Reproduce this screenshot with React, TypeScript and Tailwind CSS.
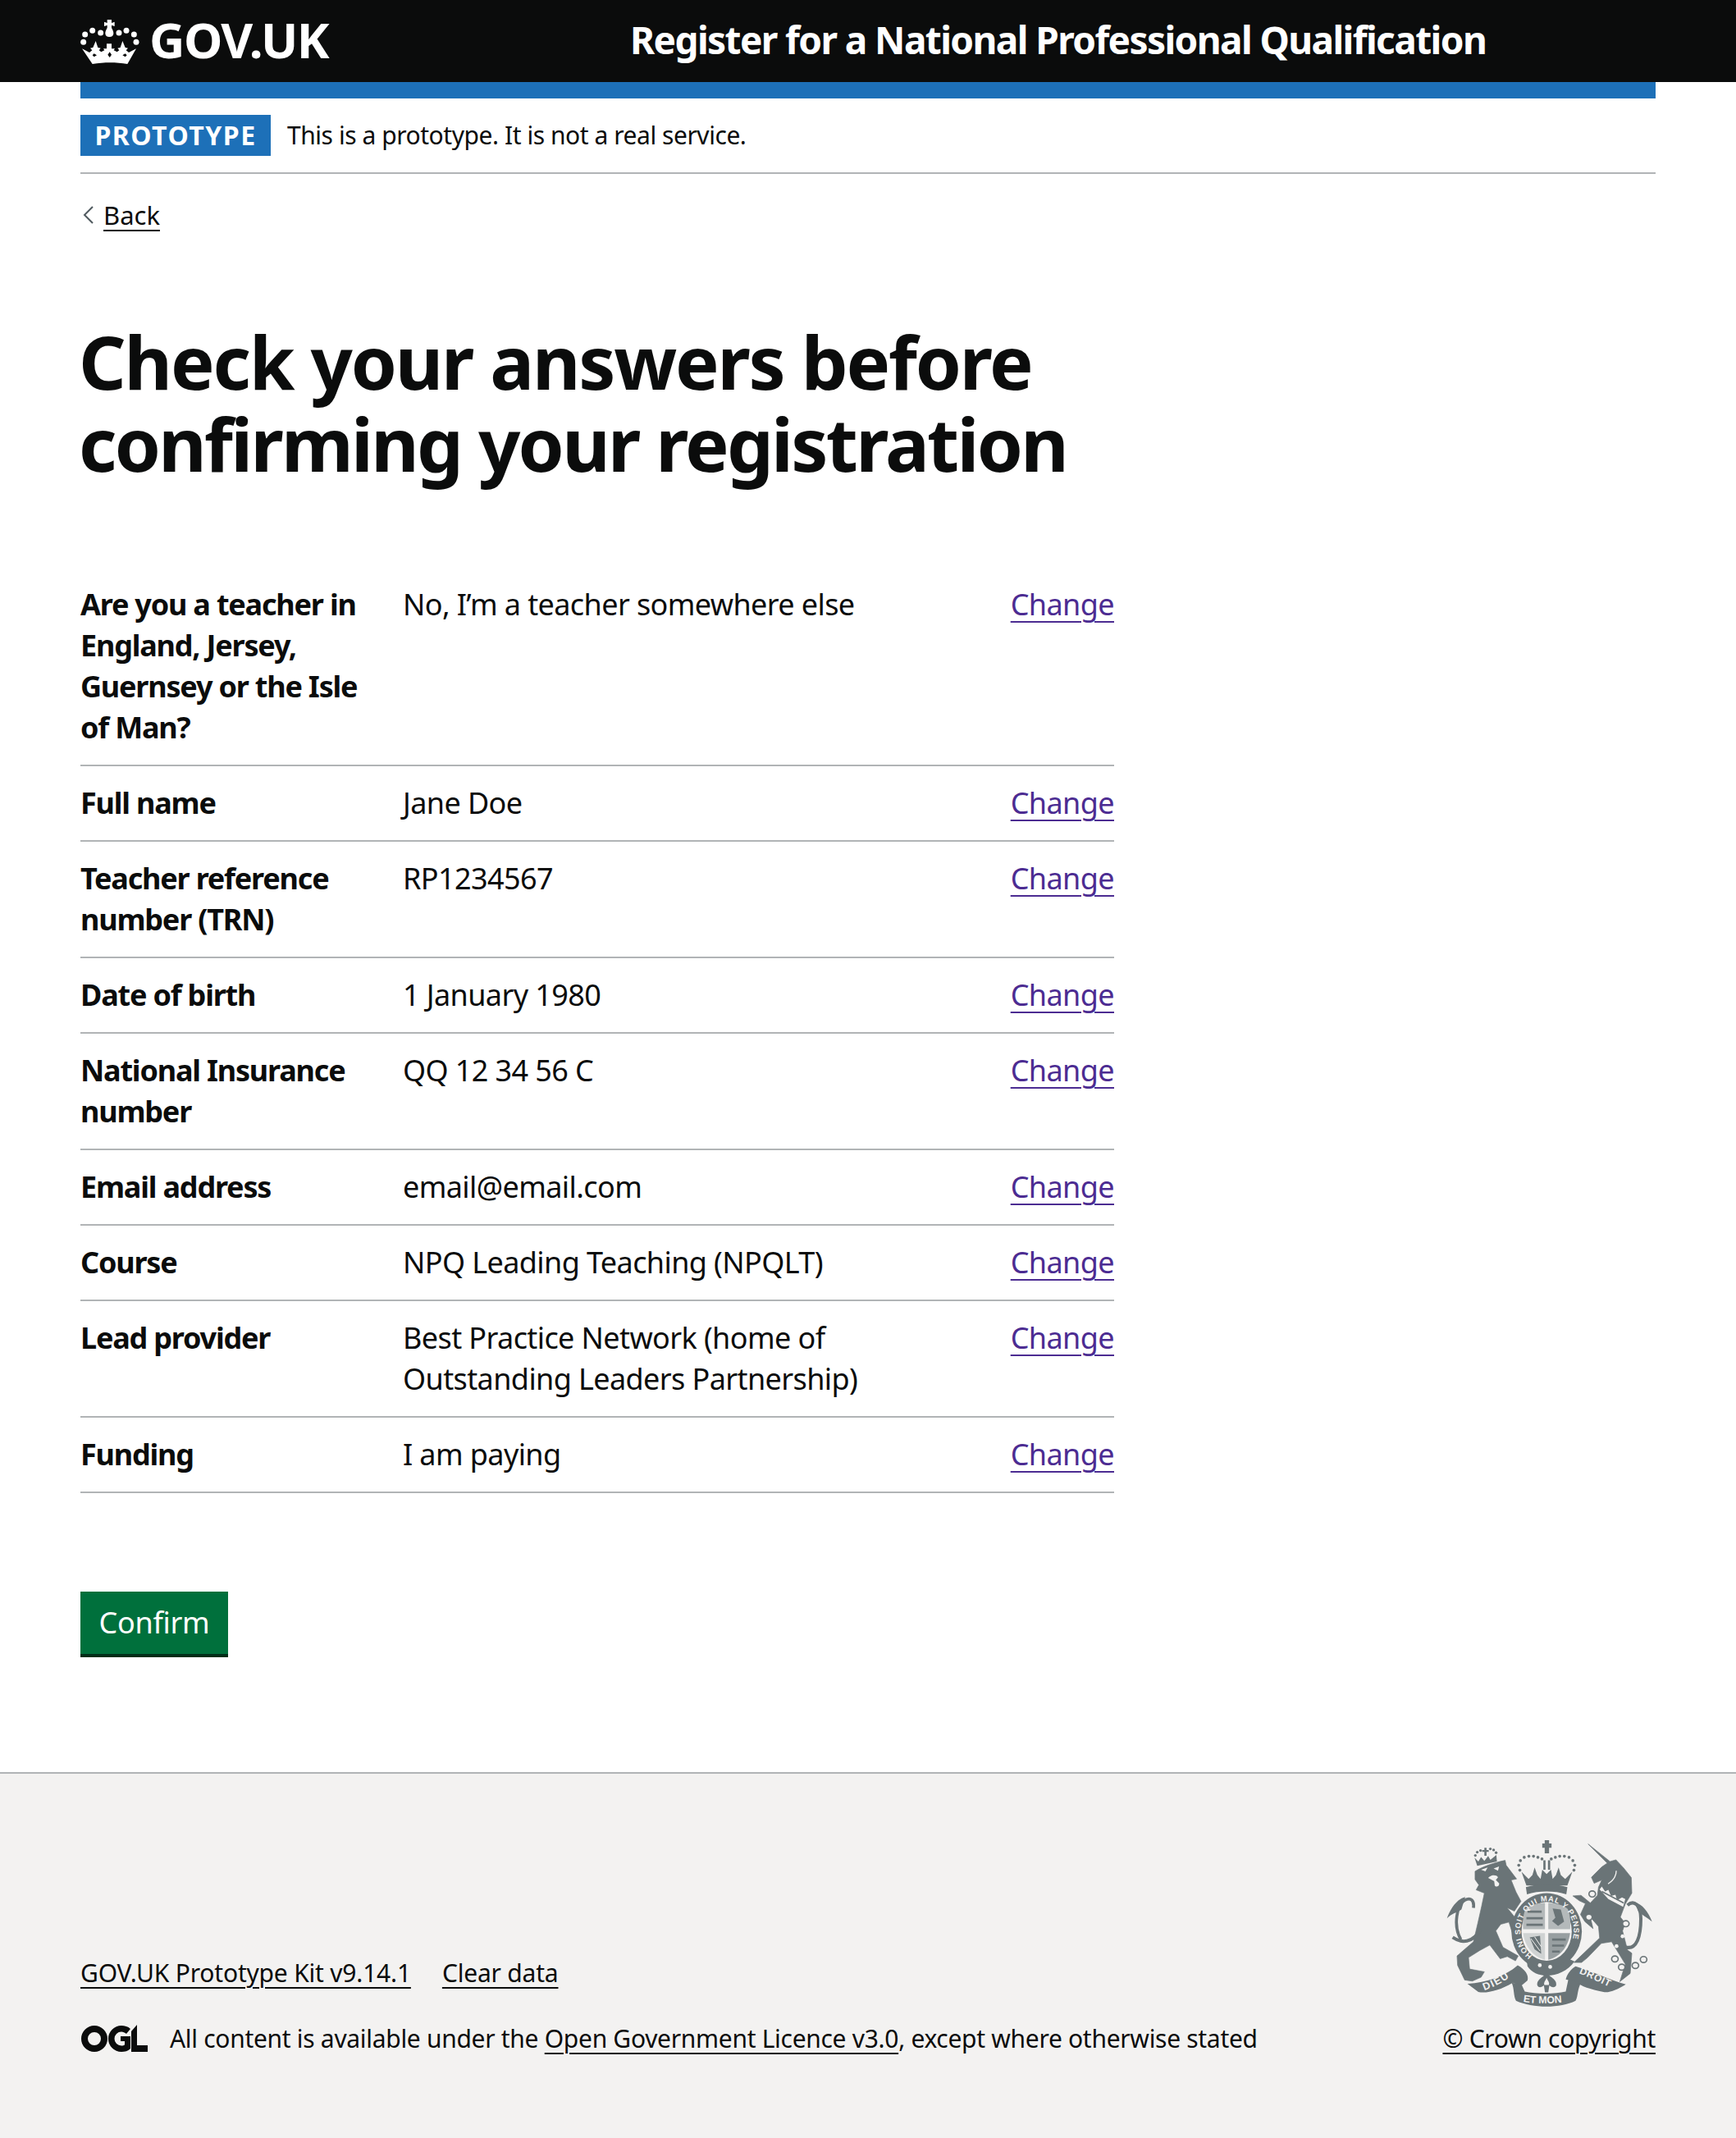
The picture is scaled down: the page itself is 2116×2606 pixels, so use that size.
const answers = [
  { label: "Are you a teacher in England, Jersey, Guernsey or the Isle of Man?", value: "No, I’m a teacher somewhere else" },
  { label: "Full name", value: "Jane Doe" },
  { label: "Teacher reference number (TRN)", value: "RP1234567" },
  { label: "Date of birth", value: "1 January 1980" },
  { label: "National Insurance number", value: "QQ 12 34 56 C" },
  { label: "Email address", value: "email@email.com" },
  { label: "Course", value: "NPQ Leading Teaching (NPQLT)" },
  { label: "Lead provider", value: "Best Practice Network (home of Outstanding Leaders Partnership)" },
  { label: "Funding", value: "I am paying" },
];

function CrownLogo() {
  return (
    <svg viewBox="24 10 216 172" className="h-[58px] w-[72px] shrink-0" fill="#fff">
      <path d="M122 18h16v12l11-4v16l-11-4v10c5 9 7 15 7 20 0 8-6 13-15 13s-15-5-15-13c0-5 2-11 7-20V38l-11 4V26l11 4z" />
      {[[41, 72], [68, 58], [98, 66], [165, 66], [192, 58], [220, 72], [35, 100], [228, 100]].map(([cx, cy]) => (
        <circle key={`${cx}-${cy}`} cx={cx} cy={cy} r="10.500" />
      ))}
      <path d="M30 124l27 14 10-8-7-8 10-2 10-24 8 24 10 2-6 8 8 6 12-6-4-6h12v-18h18v18h12l-4 6 12 6 8-6-6-8 10-2 8-24 10 24 10 2-7 8 10 8 27-14-32 56c-42-7-84-7-128 0z" />
      <path d="M74 142l10 6-10 6-6-6zM188 142l-10 6 10 6 6-6zM131 136l7 10-7 10-7-10z" fill="#0b0c0c" />
    </svg>
  );
}

function OglLogo() {
  return (
    <svg viewBox="0 0 82 34" className="h-[34px] w-[82px] shrink-0" fill="#0b0c0c">
      <path fillRule="evenodd" d="M17 1a16 16 0 1 0 0 32 16 16 0 0 0 0-32zm0 8a8 8 0 1 1 0 16 8 8 0 0 1 0-16z" />
      <path d="M50 1c4 0 8 1 11 4l-5 6c-2-1.500-4-2.500-6-2.500a8.500 8.500 0 0 0 0 17c2 0 3-.5 4-1V20h-5v-6h12v15c-3 3-7 4-11 4a16 16 0 1 1 0-32z" />
      <path d="M62 8l7-8v25h13v8H62z" />
    </svg>
  );
}

const crestFont = "'Liberation Sans', sans-serif";
const crestGrey = "#6a7477";

function RoyalCrest() {
  return (
    <svg viewBox="120 60 760 620" className="h-[207px] w-[253px]" fill={crestGrey}>
      <defs>
        <path id="garter" d="M438 490 A98 108 0 1 1 548 488" />
        <path id="ribbon-left" d="M262 618 C300 604 340 584 372 556" />
        <path id="ribbon-mid" d="M404 660 C450 668 530 668 582 656" />
        <path id="ribbon-right" d="M608 556 C650 572 690 592 728 610" />
      </defs>

      {/* lion */}
      <path
        strokeWidth="2"
        stroke={crestGrey}
        strokeLinejoin="round"
        d="M228 182 C255 165 300 150 338 142 L342 160 L380 210 L360 214 L378 258 L396 292 L372 328 L345 315 L375 352 L396 400 L380 424 L362 400 L352 368 L322 376 L304 400 L330 460 L386 492 L376 510 L346 494 L320 502 L282 452 L245 472 L204 498 L208 540 L262 550 L250 570 L218 584 L190 580 L164 526 L162 492 L222 440 L238 372 L252 310 L262 262 L232 250 L242 232 L228 212 Z"
      />
      <path d="M276 206 C290 192 308 196 312 204 L304 214 L316 226 C318 238 304 242 300 234 L298 218 Z" fill="#f3f2f1" />
      <path d="M250 176 L274 168 L266 182ZM316 164 L296 172 L312 180Z" fill="#f3f2f1" />
      <path d="M248 394 C220 446 178 446 146 424" fill="none" stroke={crestGrey} strokeWidth="12" />
      <path d="M176 432 C146 380 162 304 190 288 C212 276 226 288 222 316" fill="none" stroke={crestGrey} strokeWidth="11" />
      <path d="M192 276 C160 284 138 320 125 354 C145 334 166 332 178 322 Z" />
      {/* lion crown */}
      <path d="M236 162 L226 132 L240 146 L250 130 L262 144 L276 126 L284 140 L306 122 L308 146 Z" />
      <path d="M254 104h8v-8h8v8h8v7h-8v14h-8v-14h-8z" />
      {[[229, 124], [236, 112], [248, 106], [284, 100], [296, 104], [305, 114]].map(([cx, cy]) => (
        <circle key={`lion-${cx}`} cx={cx} cy={cy} r="5" />
      ))}

      {/* crown */}
      <path d="M483 68h16v12h9v16h-9v20h-16V96h-9V80h9z" />
      <path d="M478 142h8v34h-8zM495 142h8v34h-8z" />
      {[[392, 178], [388, 160], [394, 143], [408, 131], [425, 127], [442, 127], [458, 131], [473, 137], [507, 137], [522, 131], [538, 127], [555, 127], [572, 131], [586, 143], [593, 160], [590, 178]].map(([cx, cy]) => (
        <circle key={`crown-${cx}`} cx={cx} cy={cy} r="5.500" />
      ))}
      <path d="M398 184 L424 210 L438 196 L446 168 L456 196 L468 210 L474 176 L490 192 L506 176 L512 210 L524 196 L534 168 L542 196 L558 210 L584 184 L566 234 L416 234 Z" />
      <path d="M414 240 C460 226 520 226 566 240 L562 266 C520 252 460 252 418 266 Z" />

      {/* shield and garter */}
      <ellipse cx="490" cy="402" rx="129" ry="140" />
      <ellipse cx="490" cy="402" rx="92" ry="108" fill="#f3f2f1" />
      <path d="M413 320 C430 305 460 298 484 298 V394 H404 C402 365 404 340 413 320Z" fill="#b4b9ba" />
      <path d="M496 298 C520 298 550 305 567 320 C576 340 578 365 576 394 H496Z" fill="#b4b9ba" />
      <path d="M404 408 H484 V506 C445 495 412 465 404 408Z" fill="#d0d3d3" />
      <path d="M496 408 H576 C568 465 535 495 496 506Z" fill="#989fa1" />
      <path d="M420 326h52v8h-52zM416 350h60v8h-60zM416 374h60v8h-60zM510 428h50v8h-50zM510 450h44v8h-44zM510 472h28v8h-28z" />
      <path d="M512 318l30 4 12 44-22 16-22-18 12-12z" />
      <path d="M428 424l38-6 4 66-24-16z" />
      <path d="M432 428l34 46M446 422l24 36" stroke="#f3f2f1" strokeWidth="3" />
      <text fontFamily={crestFont} fontWeight="700" fontSize="28" fill="#f3f2f1" letterSpacing="2.500">
        <textPath href="#garter">HONI SOIT QUI MAL Y PENSE</textPath>
      </text>
      <path d="M416 500 C450 552 530 552 566 500 L592 512 C545 578 450 578 420 530 Z" />
      <circle cx="465" cy="526" r="7" fill="#f3f2f1" />
      <circle cx="503" cy="532" r="7" fill="#f3f2f1" />

      {/* unicorn */}
      <path
        strokeWidth="2"
        stroke={crestGrey}
        strokeLinejoin="round"
        d="M642 82 L722 146 L744 140 L772 170 L800 205 L802 262 L778 302 L760 350 L778 372 L768 400 L786 470 L802 482 L796 556 L758 586 L778 522 L728 440 L690 446 L640 498 L618 516 L590 516 L628 480 L684 426 L680 384 L650 350 L660 392 L630 366 L614 340 L632 300 L610 290 L586 272 L616 270 L650 298 L676 270 L680 240 L692 214 L664 226 L654 204 L692 166 L712 152 Z"
      />
      <path d="M684 248 L692 238 L704 256 L716 250 L726 272 L742 268 L748 288 L766 278 L778 284 L770 312 L716 284 Z" fill="#f3f2f1" />
      <path d="M692 256 L772 298" stroke={crestGrey} strokeWidth="5" />
      <path d="M745 180 C745 200 735 215 715 228" stroke="#f3f2f1" strokeWidth="4" fill="none" />
      <path d="M786 306 C810 285 835 305 835 355 C835 420 820 470 780 460" fill="none" stroke={crestGrey} strokeWidth="12" />
      <path d="M812 296 C840 302 862 330 876 366 C855 350 838 340 826 330 Z" />
      {[[768, 420], [746, 456]].map(([cx, cy]) => (
        <circle key={`spot-${cx}`} cx={cx} cy={cy} r="7" fill="#f3f2f1" />
      ))}
      {/* chain */}
      {[[657, 265], [780, 374], [740, 503], [765, 533], [815, 527], [845, 505], [645, 350]].map(([cx, cy]) => (
        <ellipse key={`chain-${cx}`} cx={cx} cy={cy} rx="12" ry="11" fill="#f3f2f1" stroke={crestGrey} strokeWidth="5" />
      ))}

      {/* motto */}
      <path d="M200 594 C270 590 340 565 384 526 C410 540 426 562 420 582 L396 602 L366 590 C320 618 270 630 240 624 Z" />
      <path d="M362 590 C372 610 368 640 378 656 C440 684 540 684 596 656 C606 640 602 610 618 588 L570 576 L560 622 C520 632 450 632 410 622 L398 596 Z" />
      <path d="M596 530 C650 545 720 580 780 596 C750 615 720 628 698 624 C650 612 615 605 600 586 L560 578 C566 556 580 540 596 530 Z" />
      <path d="M490 550 C498 570 530 575 525 600 C518 612 505 605 500 600 L496 625 H484 L480 600 C474 605 462 612 456 600 C452 575 482 570 490 550 Z" />
      <path d="M490 572 C494 582 502 590 498 598 H482 C478 590 486 582 490 572 Z" fill="#f3f2f1" />
      <text fontFamily={crestFont} fontWeight="700" fontSize="38" fill="#f3f2f1" letterSpacing="4">
        <textPath href="#ribbon-left">DIEU</textPath>
      </text>
      <text fontFamily={crestFont} fontWeight="700" fontSize="37" fill="#f3f2f1">
        <textPath href="#ribbon-mid">ET MON</textPath>
      </text>
      <text fontFamily={crestFont} fontWeight="700" fontSize="36" fill="#f3f2f1" letterSpacing="2">
        <textPath href="#ribbon-right">DROIT</textPath>
      </text>
    </svg>
  );
}

export default function App() {
  return (
    <div className="min-h-[2606px] bg-white font-['Noto_Sans',sans-serif] text-[#0b0c0c]">
      <header className="flex h-[100px] items-center bg-[#0b0c0c] px-[98px] text-white">
        <div className="flex w-[670px] items-center gap-3">
          <CrownLogo />
          <span className="pb-1 text-[60px] font-bold leading-none tracking-[-1.5px]">GOV.UK</span>
        </div>
        <span className="pb-1 text-[46px] font-bold leading-none tracking-[-1.6px]">
          Register for a National Professional Qualification
        </span>
      </header>

      <div className="px-[98px]">
        <div className="h-5 bg-[#1d70b8]" />

        <div className="flex items-center gap-[20px] border-b-2 border-[#b1b4b6] pb-5 pt-5">
          <strong className="flex h-[50px] w-[232px] items-center justify-center bg-[#1d70b8] text-[32px] font-bold tracking-[1.5px] text-white">
            PROTOTYPE
          </strong>
          <span className="text-[30px] leading-10 tracking-[-0.45px]">This is a prototype. It is not a real service.</span>
        </div>

        <div className="mt-[30px] flex items-center gap-[10px] text-[31px] leading-10">
          <svg viewBox="0 0 16 24" className="ml-0.5 h-6 w-4" fill="none" stroke="#505a5f" strokeWidth="2">
            <path d="M13 2L3 12l10 10" />
          </svg>
          <a className="underline decoration-2 underline-offset-[6px]">Back</a>
        </div>

        <h1 className="-ml-0.5 mt-[108px] text-[90px] font-bold leading-[100px] tracking-[-2.7px]">
          <span className="tracking-[-2.2px]">Check your answers before</span>
          <br />
          confirming your registration
        </h1>

        <dl className="mt-[102px] w-[1260px]">
          {answers.map((answer) => (
            <div key={answer.label} className="flex border-b-2 border-[#b1b4b6] py-5 text-[36px] leading-[50px]">
              <dt className="w-[393px] shrink-0 pr-[30px] font-bold tracking-[-1.2px]">{answer.label}</dt>
              <dd className="w-[600px] shrink-0 tracking-[-0.6px]">{answer.value}</dd>
              <dd className="ml-auto tracking-[-0.6px]">
                <a className="text-[#4c2c92] underline decoration-2 underline-offset-[7px]">Change</a>
              </dd>
            </div>
          ))}
        </dl>

        <button
          type="button"
          className="mt-[120px] h-20 w-[180px] border-b-4 border-[#002d18] bg-[#00703c] text-[36px] leading-none tracking-[-0.3px] text-white"
        >
          Confirm
        </button>
      </div>

      <footer className="mt-[140px] flex items-end justify-between border-t-2 border-[#b1b4b6] bg-[#f3f2f1] px-[98px] pb-[101px] pt-[78px] text-[30px] leading-10 tracking-[-0.3px]">
        <div>
          <div className="flex gap-[38px] tracking-[-0.2px]">
            <a className="underline decoration-2 underline-offset-[6px]">GOV.UK Prototype Kit v9.14.1</a>
            <a className="underline decoration-2 underline-offset-[6px]">Clear data</a>
          </div>
          <div className="mt-10 flex items-center gap-[27px]">
            <OglLogo />
            <span>
              All content is available under the{" "}
              <a className="underline decoration-2 underline-offset-[6px]">Open Government Licence v3.0</a>, except
              where otherwise stated
            </span>
          </div>
        </div>
        <div className="flex flex-col items-center gap-[18px]">
          <RoyalCrest />
          <a className="underline decoration-2 underline-offset-[6px]">© Crown copyright</a>
        </div>
      </footer>
    </div>
  );
}
